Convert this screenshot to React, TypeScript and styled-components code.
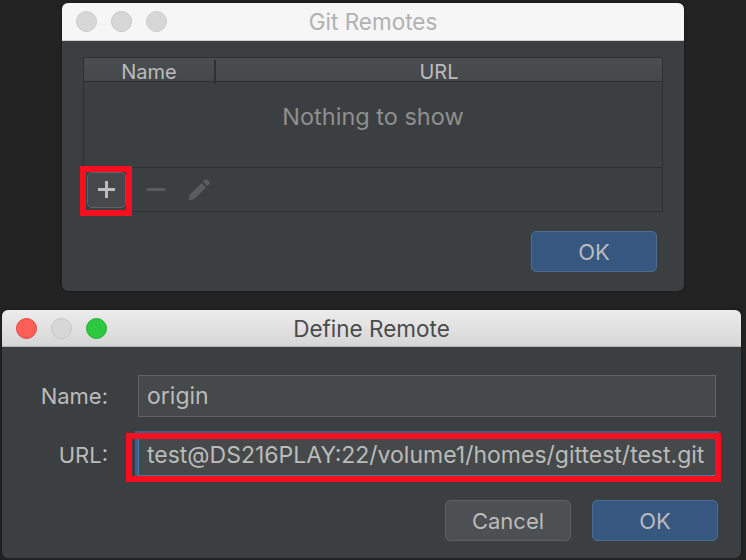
import styled, { createGlobalStyle } from "styled-components";

const GlobalStyle = createGlobalStyle`
  body {
    margin: 0;
    background: #222222;
    font-family: Inter, "Noto Sans", sans-serif;
    -webkit-font-smoothing: antialiased;
  }
`;

/*-----------------------------------------------------------------------------------*/

const TrafficLights = ({ active }: { active?: boolean }) => (
  <Lights>
    <Light $fill={active ? "#fe5f57" : "#d7d7d7"} $edge={active ? "#e2463f" : "#cbcbcb"} />
    <Light $fill="#d7d7d7" $edge="#c6c6c6" />
    <Light $fill={active ? "#2bc840" : "#d7d7d7"} $edge={active ? "#1fae30" : "#cbcbcb"} />
  </Lights>
);

const PencilIcon = () => (
  <svg width="24" height="24" viewBox="0 0 24 24">
    <path d="M1.5 22.5 L3 16.5 L14.5 5 L19 9.5 L7.5 21 Z" fill="#5a5d5f" />
    <path d="M16 3.5 L18 1.5 Q19 0.6 20 1.5 L22.5 4 Q23.4 5 22.5 6 L20.5 8 Z" fill="#5a5d5f" />
  </svg>
);

export default function App() {
  return (
    <>
      <GlobalStyle />
      <Page>
        <Window $width={622} $left={62}>
          <TitleBar>
            <TrafficLights />
            <Title>Git Remotes</Title>
          </TitleBar>
          <RemotesBody>
            <Table>
              <TableHeader>
                <HeaderCell>Name</HeaderCell>
                <HeaderCell $divider>URL</HeaderCell>
              </TableHeader>
              <EmptyArea>Nothing to show</EmptyArea>
              <Toolbar>
                <Marked $box="-6px -6px -8px -7px">
                  <ToolButton>
                    <PlusGlyph />
                  </ToolButton>
                </Marked>
                <ToolIcon>
                  <MinusGlyph />
                </ToolIcon>
                <ToolIcon>
                  <PencilIcon />
                </ToolIcon>
              </Toolbar>
            </Table>
            <Footer $pad="19px 6px 0 0">
              <Button $primary>OK</Button>
            </Footer>
          </RemotesBody>
        </Window>

        <Window $width={739} $left={2} $gap={19}>
          <TitleBar $active>
            <TrafficLights active />
            <Title $active>Define Remote</Title>
          </TitleBar>
          <Form>
            <Label>Name:</Label>
            <Field defaultValue="origin" />
            <Label>URL:</Label>
            <Marked $box="-1px -5px -6px -12px">
              <Field $focused defaultValue="test@DS216PLAY:22/volume1/homes/gittest/test.git" />
            </Marked>
          </Form>
          <Footer $pad="24px 23px 17px 0">
            <Button>Cancel</Button>
            <Button $primary>OK</Button>
          </Footer>
        </Window>
      </Page>
    </>
  );
}

/*-----------------------------------------------------------------------------------*/

const Page = styled.div`
  display: flex;
  flex-direction: column;
  align-items: flex-start;
  padding-top: 3px;
`;

const Window = styled.div<{ $width: number; $left: number; $gap?: number }>`
  width: ${({ $width }) => $width}px;
  margin-left: ${({ $left }) => $left}px;
  margin-top: ${({ $gap }) => $gap ?? 0}px;
  background: #3c3f41;
  border-radius: 6px;
  overflow: hidden;
  box-shadow: 0 0 0 1px #1b1b1b;
`;

const TitleBar = styled.div<{ $active?: boolean }>`
  display: grid;
  grid-template-columns: 1fr auto 1fr;
  align-items: center;
  height: ${({ $active }) => ($active ? 36 : 37)}px;
  background: ${({ $active }) =>
    $active ? "linear-gradient(#ececec, #d6d6d6)" : "#f6f6f6"};
  border-bottom: 1px solid ${({ $active }) => ($active ? "#b4b4b4" : "#d0d0d0")};
`;

const Lights = styled.div`
  display: flex;
  gap: 14px;
  padding-left: 14px;
`;

const Light = styled.span<{ $fill: string; $edge: string }>`
  width: 19px;
  height: 19px;
  border-radius: 50%;
  background: ${({ $fill }) => $fill};
  border: 1px solid ${({ $edge }) => $edge};
`;

const Title = styled.div<{ $active?: boolean }>`
  font-size: 22.5px;
  color: ${({ $active }) => ($active ? "#4b4b4b" : "#b1b1b1")};
`;

const RemotesBody = styled.div`
  padding: 16px 21px 19px;
`;

const Table = styled.div`
  border: 1px solid #2d2f30;
`;

const TableHeader = styled.div`
  display: grid;
  grid-template-columns: 130px 1fr;
  height: 23px;
  background: linear-gradient(#4b4e50, #45484a);
  border-bottom: 1px solid #2b2d2e;
`;

const HeaderCell = styled.div<{ $divider?: boolean }>`
  display: flex;
  align-items: center;
  justify-content: center;
  font-size: 20px;
  color: #bbbbbb;
  border-left: ${({ $divider }) => ($divider ? "2px solid #2e3032" : "none")};
  margin: ${({ $divider }) => ($divider ? "2px 0" : "0")};
`;

const EmptyArea = styled.div`
  display: flex;
  justify-content: center;
  height: 86px;
  padding-top: 20px;
  box-sizing: border-box;
  font-size: 23.5px;
  color: #8f8f8f;
  border-bottom: 1px solid #2d2f30;
`;

const Toolbar = styled.div`
  display: flex;
  align-items: center;
  gap: 17px;
  height: 43px;
  padding-left: 3px;
`;

const Marked = styled.div<{ $box: string }>`
  position: relative;

  &::after {
    content: "";
    position: absolute;
    inset: ${({ $box }) => $box};
    border: 6px solid #f5101f;
    pointer-events: none;
  }
`;

const ToolButton = styled.div`
  display: flex;
  align-items: center;
  justify-content: center;
  width: 37px;
  height: 34px;
  border-radius: 5px;
  background: #45494b;
  border: 1px solid #5f6366;
`;

const PlusGlyph = styled.span`
  position: relative;
  width: 17px;
  height: 3px;
  background: #bdbdbd;

  &::after {
    content: "";
    position: absolute;
    left: 7px;
    top: -7px;
    width: 3px;
    height: 17px;
    background: #bdbdbd;
  }
`;

const ToolIcon = styled.div`
  display: flex;
  align-items: center;
  justify-content: center;
  width: 26px;
  height: 26px;
`;

const MinusGlyph = styled.span`
  width: 18px;
  height: 3px;
  background: #5a5d5f;
`;

const Footer = styled.div<{ $pad: string }>`
  display: flex;
  justify-content: flex-end;
  gap: 21px;
  padding: ${({ $pad }) => $pad};
`;

const Button = styled.button<{ $primary?: boolean }>`
  width: 126px;
  height: 41px;
  border-radius: 5px;
  font-family: inherit;
  font-size: 22px;
  color: #bbbbbb;
  background: ${({ $primary }) => ($primary ? "#365880" : "#4c5052")};
  border: 1px solid ${({ $primary }) => ($primary ? "#4a6e91" : "#5e6163")};
`;

const Form = styled.div`
  display: grid;
  grid-template-columns: 106px 1fr;
  align-items: center;
  column-gap: 30px;
  row-gap: 17px;
  padding: 28px 25px 0 0;
`;

const Label = styled.div`
  text-align: right;
  font-size: 22px;
  color: #bbbbbb;
`;

const Field = styled.input<{ $focused?: boolean }>`
  display: block;
  width: 100%;
  height: 42px;
  box-sizing: border-box;
  padding: 0 8px;
  font-family: inherit;
  font-size: 23px;
  color: #bbbbbb;
  background: #45494a;
  border: 1px solid ${({ $focused }) => ($focused ? "#4f7aa6" : "#646464")};
  box-shadow: ${({ $focused }) => ($focused ? "0 0 0 3px #3d6185" : "none")};
  outline: none;
`;
